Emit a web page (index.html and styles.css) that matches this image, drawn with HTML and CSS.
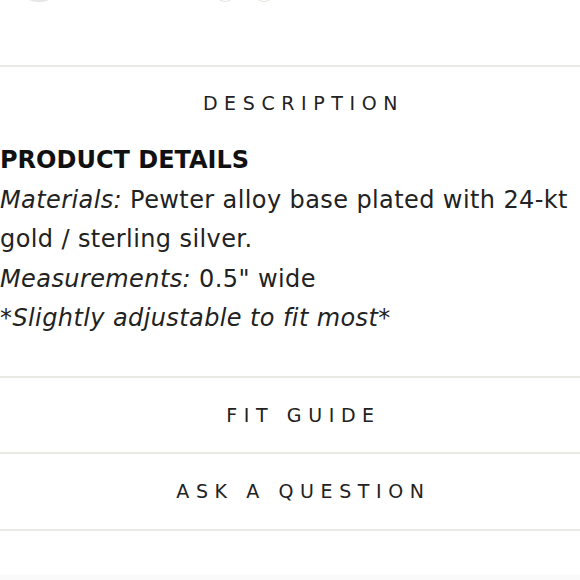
FILE: index.html
```html
<!DOCTYPE html>
<html>
<head>
<meta charset="utf-8">
<link rel="stylesheet" href="styles.css">
</head>
<body>
<div class="top">
  <div class="thumb"></div>
  <div class="dots"><span class="dot"></span><span class="dot"></span></div>
</div>
<section class="acc open">
  <div class="acc-head">DESCRIPTION</div>
  <div class="acc-body">
    <p class="title">PRODUCT DETAILS</p>
    <p><em>Materials:</em> Pewter alloy base plated with 24-kt gold / sterling silver.</p>
    <p><em>Measurements:</em> 0.5" wide</p>
    <p><em>*Slightly adjustable to fit most*</em></p>
  </div>
</section>
<section class="acc">
  <div class="acc-head">FIT GUIDE</div>
</section>
<section class="acc last">
  <div class="acc-head">ASK A QUESTION</div>
</section>
<div class="foot"></div>
</body>
</html>
```
FILE: styles.css
```css
html, body {
  margin: 0;
  padding: 0;
  background: #fff;
}
body {
  font-family: "DejaVu Sans", "Liberation Sans", sans-serif;
  color: #1a1a1a;
  width: 580px;
  height: 580px;
  overflow: hidden;
  display: flex;
  flex-direction: column;
}
.top {
  height: 65px;
  position: relative;
  overflow: hidden;
  flex: none;
}
.thumb {
  position: absolute;
  left: 12px;
  top: -52px;
  width: 54px;
  height: 54px;
  border-radius: 50%;
  background: radial-gradient(circle at 50% 40%, #fff 55%, #e4e4e4 75%, #f6f6f6 100%);
}
.dots {
  position: absolute;
  left: 214px;
  top: -20px;
  display: flex;
  gap: 17px;
}
.dot {
  width: 22px;
  height: 22px;
  border-radius: 50%;
  border: 1px solid #e6e4da;
  box-sizing: border-box;
}
.acc {
  border-top: 2px solid #ebe9e3;
  flex: none;
}
.acc.last {
  border-bottom: 2px solid #ebe9e3;
}
.acc-head {
  height: 74.5px;
  display: flex;
  align-items: center;
  justify-content: center;
  font-size: 19px;
  letter-spacing: 6.6px;
  padding-left: 27px;
  color: #222;
}
.acc.open .acc-head {
  height: 72px;
}
.acc-body {
  padding: 2px 0 37px 0;
  font-size: 24px;
  letter-spacing: 0.4px;
  line-height: 39.5px;
  color: #222;
}
.acc-body p {
  margin: 0;
}
.acc-body .title {
  font-weight: bold;
  letter-spacing: 0;
  color: #111;
}
.foot {
  flex: 1;
  display: flex;
  flex-direction: column;
  justify-content: flex-end;
}
.foot::after {
  content: "";
  height: 5px;
  background: #fafafa;
}
```
